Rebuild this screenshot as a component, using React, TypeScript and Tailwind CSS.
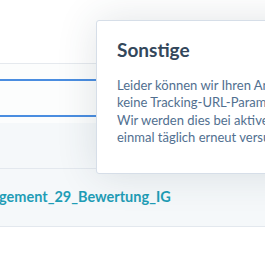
import React from 'react';

const bodyLines = [
  'Leider können wir Ihren Anzeigen',
  'keine Tracking-URL-Parameter hinzufügen.',
  'Wir werden dies bei aktiven Anzeigen',
  'einmal täglich erneut versuchen.',
];

export default function App() {
  return (
    <div className="relative w-[265px] h-[265px] overflow-hidden bg-white" style={{ fontFamily: 'Lato, "Noto Sans", sans-serif' }}>
      {/* table rows */}
      <div className="h-[63px] bg-white" />
      <div className="h-[60px] border-t border-[#e5e9ee] bg-[#fcfdfd] flex flex-col">
        <div className="mt-[15px] h-[2px] bg-[#4a8de0]" />
        <div className="mt-[34px] h-[2px] bg-[#4a8de0]" />
      </div>
      <div className="h-[45px] bg-[#f5f8fa]" />
      <div className="h-[59px] border-t border-[#e3e8ee] border-b bg-[#f5f8fa] flex items-center">
        <span className="text-[14.5px] font-bold text-[#1f9db6] whitespace-nowrap ml-[-1px] mt-[-2px]">gement_29_Bewertung_IG</span>
      </div>

      {/* popover */}
      <div className="absolute left-[96px] top-[20px] w-[280px] h-[154px] bg-white border border-[#d6dee8] rounded-[3px] shadow-[0_0_40px_rgba(45,62,80,0.14)] pl-[20px] pt-[18px]">
        <div className="text-[19px] font-bold text-[#33475b] leading-[22px] whitespace-nowrap">Sonstige</div>
        <div className="mt-[16px] text-[13px] leading-[17.4px] text-[#516f90] whitespace-nowrap">
          {bodyLines.map((l) => (
            <div key={l}>{l}</div>
          ))}
        </div>
      </div>
    </div>
  );
}
